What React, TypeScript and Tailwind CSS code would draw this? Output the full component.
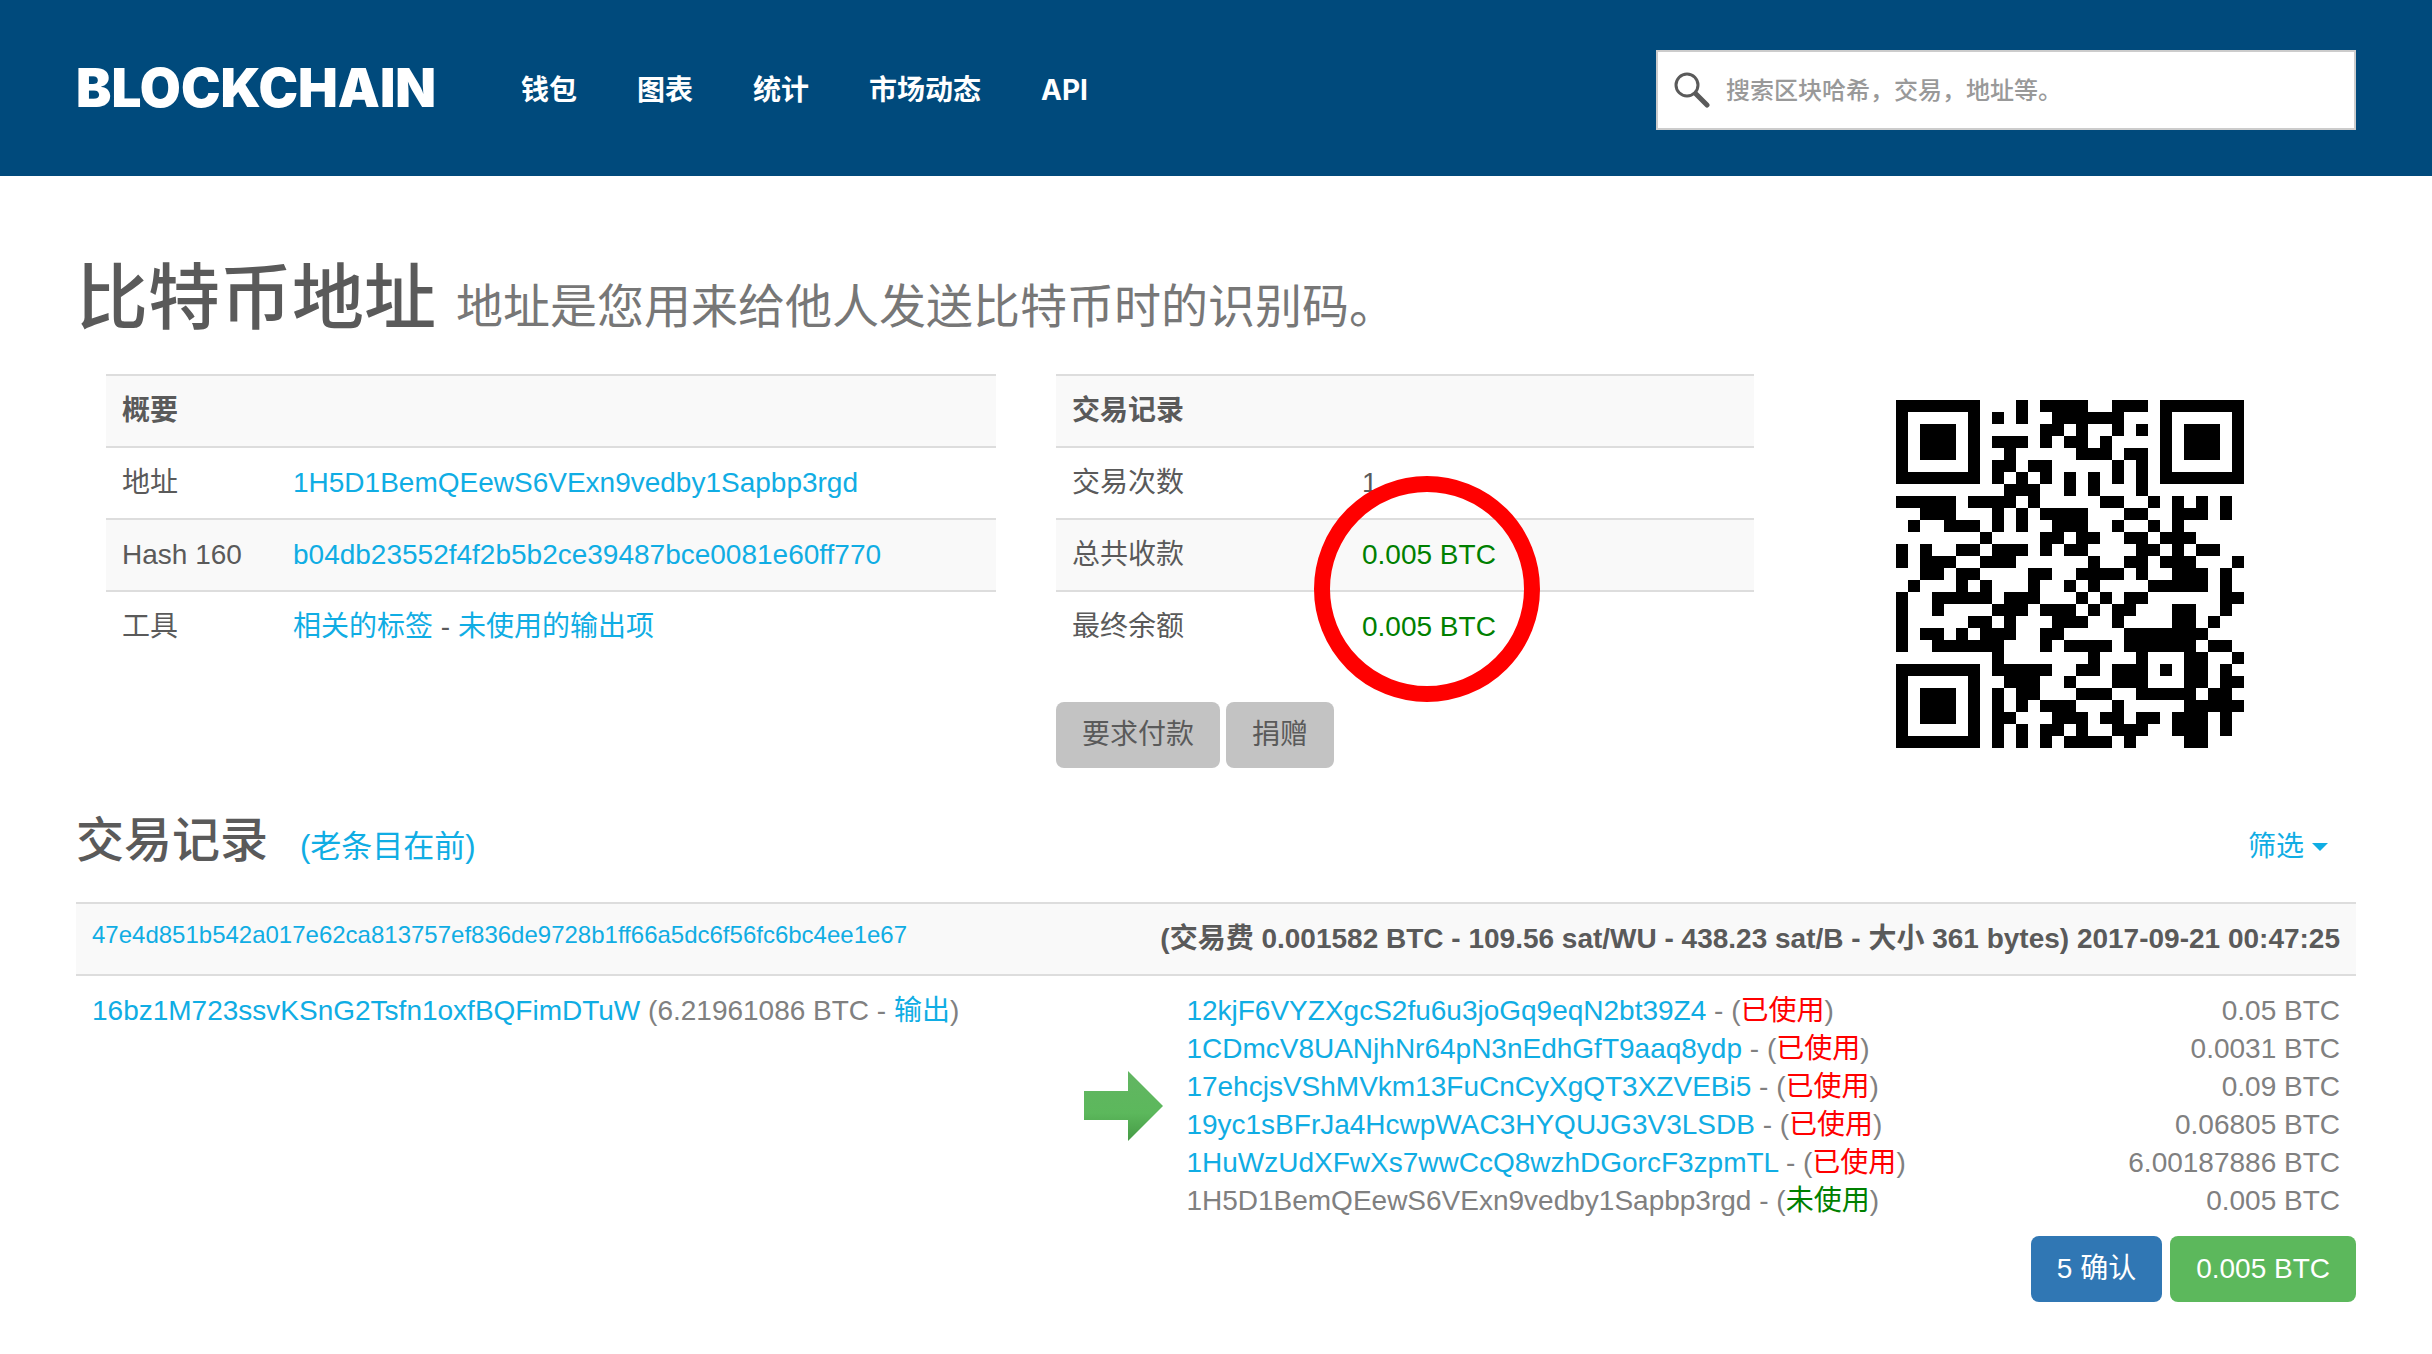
import type { ReactNode } from 'react';

const QR_ROWS = [
  '#######...#.####..###.#######',
  '#.....#.#.#..######...#.....#',
  '#.###.#.....##.#..#.#.#.###.#',
  '#.###.#.###.#.##.#....#.###.#',
  '#.###.#..#.....###.##.#.###.#',
  '#.....#.##.##.....#.#.#.....#',
  '#######.#.#.#.#.#.#.#.#######',
  '.........###..#.#...#........',
  '#####.####.#.....##..#.#.#.#.',
  '..###...#.#.####...##..###.#.',
  '.#..###.#.#..###..#..#.#.....',
  '.......#....##.##..##.###....',
  '#.#..##.###.#.##....##.#.##..',
  '#.###..###......#..##.###...#',
  '..##.##....##..####.#..###.#.',
  '.#...#.#...#..#.#....#####.#.',
  '#..#####.###...#.#.##......##',
  '#..#....###.###.#.##...##..#.',
  '#.....##.#...###..#....##.#..',
  '#.##.#.###..##.....#######...',
  '#..######...#.####.######.##.',
  '........#.......#...#...##..#',
  '#######.#####..##.###.#.##.#.',
  '#.....#..###..#...###...##.##',
  '#.###.#.#.##...###..#####.##.',
  '#.###.#.#.#.###...#.....#####',
  '#.###.#.##...###.##.##.###.#.',
  '#.....#.#.#.##.#..###..###.#.',
  '#######.#.#.#.####.#....##...',
];

const NAV = ['钱包', '图表', '统计', '市场动态', 'API'];

const OUTPUTS = [
  { address: '12kjF6VYZXgcS2fu6u3joGq9eqN2bt39Z4', spent: true, amount: '0.05 BTC' },
  { address: '1CDmcV8UANjhNr64pN3nEdhGfT9aaq8ydp', spent: true, amount: '0.0031 BTC' },
  { address: '17ehcjsVShMVkm13FuCnCyXgQT3XZVEBi5', spent: true, amount: '0.09 BTC' },
  { address: '19yc1sBFrJa4HcwpWAC3HYQUJG3V3LSDB', spent: true, amount: '0.06805 BTC' },
  { address: '1HuWzUdXFwXs7wwCcQ8wzhDGorcF3zpmTL', spent: true, amount: '6.00187886 BTC' },
  { address: '1H5D1BemQEewS6VExn9vedby1Sapbp3rgd', spent: false, amount: '0.005 BTC' },
];

function Link({ children }: { children: ReactNode }) {
  return (
    <a href="#" className="text-[#10ade4]">
      {children}
    </a>
  );
}

function QrCode() {
  return (
    <svg viewBox="0 0 29 29" className="size-[348px]" shapeRendering="crispEdges" role="img" aria-label="QR">
      {QR_ROWS.map((row, y) =>
        row.split('').map((cell, x) =>
          cell === '#' ? <rect key={`${x}-${y}`} x={x} y={y} width="1" height="1" /> : null
        )
      )}
    </svg>
  );
}

function Header() {
  return (
    <header className="flex h-44 items-center bg-[#004a7c] px-[76px] text-white">
      <a href="#" className="w-[365px] shrink-0 font-['Inter','Noto_Sans_CJK_SC',sans-serif] text-[53px] leading-none font-black">
        BLOCKCHAIN
      </a>
      <nav className="ml-20 flex grow gap-[60px] pt-1 font-['Inter','Noto_Sans_CJK_SC',sans-serif] text-[28px] leading-10 font-bold">
        {NAV.map((item) => (
          <a key={item} href="#">
            {item}
          </a>
        ))}
      </nav>
      <label className="mt-1 flex h-20 w-[30%] min-w-[700px] items-center gap-4 border-2 border-[#ccc] bg-white pl-4">
        <svg viewBox="0 0 36 36" className="size-9 shrink-0" fill="none" stroke="#5a5a5a" strokeLinecap="round">
          <circle cx="13" cy="13" r="11" strokeWidth="3" />
          <path d="M22 22 L33 33" strokeWidth="5" />
        </svg>
        <input
          type="text"
          aria-label="搜索"
          placeholder="搜索区块哈希，交易，地址等。"
          className="min-w-0 grow pt-0.5 text-2xl font-medium text-[#555] outline-none placeholder:text-[#999]"
        />
      </label>
    </header>
  );
}

function InfoTable({ title, labelWidth, rows }: { title: string; labelWidth: string; rows: [string, ReactNode][] }) {
  return (
    <table className="w-full table-fixed text-left leading-10">
      <thead>
        <tr className="border-y-2 border-[#ddd] bg-[#f9f9f9]">
          <th className={`${labelWidth} px-4 py-[15px] font-bold`}>{title}</th>
          <th></th>
        </tr>
      </thead>
      <tbody>
        {rows.map(([label, value]) => (
          <tr key={label} className="border-[#ddd] not-last:border-b-2 even:bg-[#f9f9f9]">
            <td className="px-4 py-[15px]">{label}</td>
            <td className="px-4 py-[15px]">{value}</td>
          </tr>
        ))}
      </tbody>
    </table>
  );
}

function Arrow() {
  return (
    <svg viewBox="0 0 80 72" className="h-[72px] w-20">
      <defs>
        <linearGradient id="arrow" x1="0" y1="0" x2="0" y2="1">
          <stop offset="0" stopColor="#62b562" />
          <stop offset="0.6" stopColor="#5cb85c" />
          <stop offset="1" stopColor="#459a45" />
        </linearGradient>
      </defs>
      <path d="M0 21 H44 V1 L79 36 L44 71 V50 H0 Z" fill="url(#arrow)" />
    </svg>
  );
}

function Transaction() {
  return (
    <table className="w-full table-fixed text-left leading-[38px] text-[#808080]">
      <colgroup>
        <col className="w-[43.5%]" />
        <col className="w-[4.5%]" />
        <col />
      </colgroup>
      <thead>
        <tr className="border-y-2 border-[#ddd] bg-[#f9f9f9] leading-10">
          <th colSpan={3} className="px-4 py-[15px]">
            <div className="flex justify-between">
              <span className="-mt-1 text-2xl leading-10 font-normal">
                <Link>47e4d851b542a017e62ca813757ef836de9728b1ff66a5dc6f56fc6bc4ee1e67</Link>
              </span>
              <span className="font-bold text-[#5a5a5a]">
                (交易费 0.001582 BTC - 109.56 sat/WU - 438.23 sat/B - 大小 361 bytes) 2017-09-21 00:47:25
              </span>
            </div>
          </th>
        </tr>
      </thead>
      <tbody>
        <tr>
          <td className="px-4 pt-4 align-top">
            <Link>16bz1M723ssvKSnG2Tsfn1oxfBQFimDTuW</Link> (6.21961086 BTC - <Link>输出</Link>)
          </td>
          <td className="pt-4 pl-4 align-middle">
            <Arrow />
          </td>
          <td className="px-4 pt-4">
            <ul>
              {OUTPUTS.map((out) => (
                <li key={out.address} className="flex justify-between">
                  <span>
                    {out.spent ? <Link>{out.address}</Link> : out.address} - (
                    <span className={out.spent ? 'text-[#ff0000]' : 'text-[#008000]'}>
                      {out.spent ? '已使用' : '未使用'}
                    </span>
                    )
                  </span>
                  <span>{out.amount}</span>
                </li>
              ))}
            </ul>
          </td>
        </tr>
      </tbody>
    </table>
  );
}

export default function App() {
  return (
    <div className="bg-white font-['Liberation_Sans','Noto_Sans_CJK_SC',sans-serif] text-[28px] text-[#5a5a5a]" lang="zh-CN">
      <Header />
      <main className="px-[76px] pt-[82px] pb-14">
        <h1 className="text-[72px] leading-20 font-medium">
          比特币地址 <small className="text-[47px] leading-none font-normal text-[#777]">地址是您用来给他人发送比特币时的识别码。</small>
        </h1>

        <div className="mt-9 grid grid-cols-[950fr_698fr_602fr] pl-[30px]">
          <div className="pr-[60px]">
            <InfoTable
              title="概要"
              labelWidth="w-[171px]"
              rows={[
                ['地址', <Link>1H5D1BemQEewS6VExn9vedby1Sapbp3rgd</Link>],
                ['Hash 160', <Link>b04db23552f4f2b5b2ce39487bce0081e60ff770</Link>],
                ['工具', <><Link>相关的标签</Link> - <Link>未使用的输出项</Link></>],
              ]}
            />
          </div>
          <div className="relative">
            <InfoTable
              title="交易记录"
              labelWidth="w-[290px]"
              rows={[
                ['交易次数', '1'],
                ['总共收款', <span className="text-[#008000]">0.005 BTC</span>],
                ['最终余额', <span className="text-[#008000]">0.005 BTC</span>],
              ]}
            />
            {/* marker ring over the balances */}
            <div className="pointer-events-none absolute top-[102px] left-[258px] size-[226px] rounded-full border-16 border-[#ff0000]" />
            <div className="mt-10 flex gap-1.5">
              <button type="button" className="h-[66px] rounded-lg bg-[#c3c3c3] px-[26px]">要求付款</button>
              <button type="button" className="h-[66px] rounded-lg bg-[#c3c3c3] px-[26px]">捐赠</button>
            </div>
          </div>
          <div className="flex justify-center pt-[26px] pl-[30px]">
            <QrCode />
          </div>
        </div>

        <div className="mt-[42px] mb-[30px] flex items-center justify-between">
          <h2 className="text-[48px] leading-[62px] font-medium">
            交易记录
            <small className="ml-8 text-[31px] leading-none font-normal"><Link>(老条目在前)</Link></small>
          </h2>
          <button type="button" aria-haspopup="menu" className="mt-3 mr-7 flex items-center gap-2 text-[#10ade4]">
            筛选
            <svg viewBox="0 0 16 8" className="h-2 w-4" fill="currentColor">
              <path d="M0 0 H16 L8 8 Z" />
            </svg>
          </button>
        </div>

        <Transaction />

        <div className="mt-4 flex justify-end gap-2 text-white">
          <button type="button" className="h-[66px] rounded-lg bg-[#3077b4] px-[26px]">5 确认</button>
          <button type="button" className="h-[66px] rounded-lg bg-[#5cb85c] px-[26px]">0.005 BTC</button>
        </div>
      </main>
    </div>
  );
}
